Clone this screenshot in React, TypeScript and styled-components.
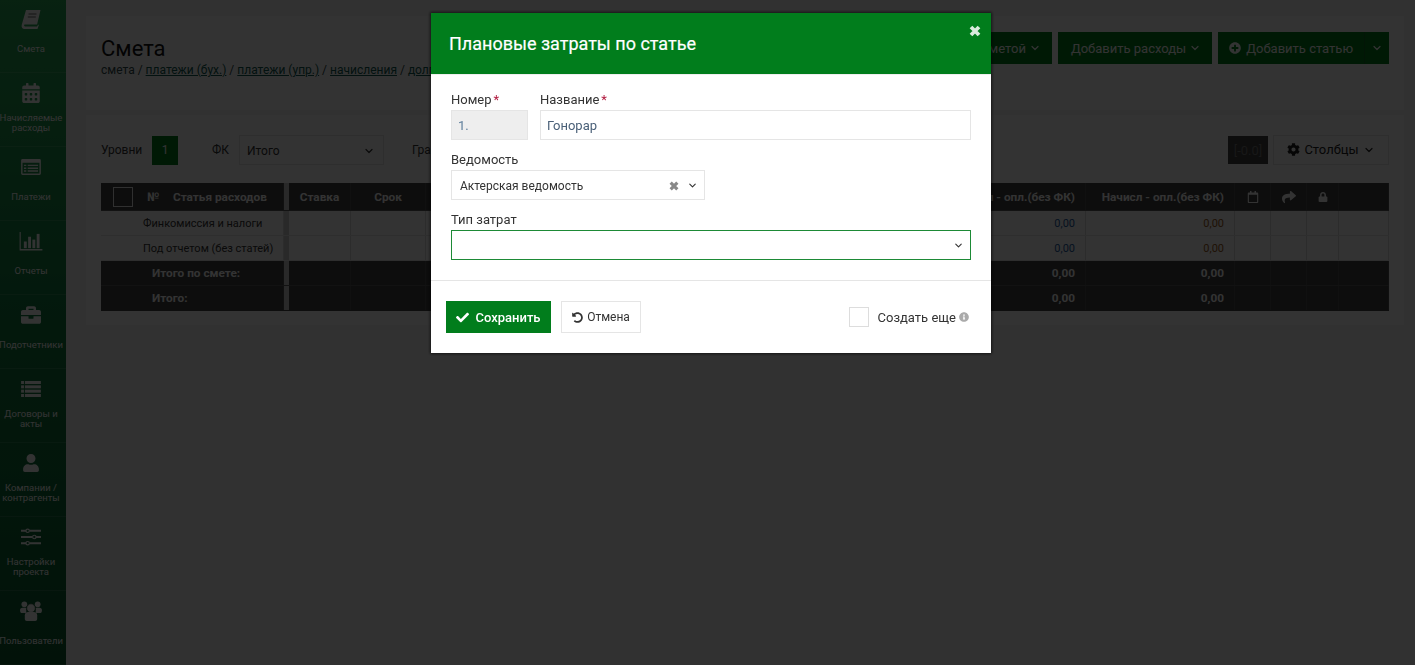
import { ReactNode } from "react";
import styled, { createGlobalStyle } from "styled-components";
import { ChevronDown } from "lucide-react";
import {
    FaBriefcase,
    FaCalendarAlt,
    FaCheck,
    FaCog,
    FaInfoCircle,
    FaLock,
    FaPlusCircle,
    FaShare,
    FaUndoAlt,
    FaUser,
    FaRegCalendar,
} from "react-icons/fa";

const GlobalStyle = createGlobalStyle`
    html, body {
        margin: 0;
        height: 100%;
        overflow: hidden;
        background: #f6f6f6;
        font-family: Roboto, "Liberation Sans", sans-serif;
        color: #333;
    }
    * { box-sizing: border-box; }
`;

const Page = styled.div`
    display: flex;
    height: 665px;
`;

const Sidebar = styled.nav`
    width: 66px;
    flex: none;
    height: 665px;
    overflow: hidden;
    background: linear-gradient(180deg, #28a855 0%, #127c40 45%, #0a5c30 100%);
`;

const SideItem = styled.div`
    height: 74px;
    padding: 8px 4px 0 0;
    border-bottom: 1px solid rgba(255, 255, 255, 0.12);
    color: #fff;
    text-align: center;

    &:first-child {
        height: 73px;
        padding-top: 7px;
    }
`;

const SideIcon = styled.div`
    height: 24px;
    margin-bottom: 8px;
    display: flex;
    align-items: center;
    justify-content: center;
    font-size: 20px;
`;

const SideLabel = styled.div`
    height: 20px;
    display: flex;
    align-items: center;
    justify-content: center;
    font-size: 9.5px;
    line-height: 10px;
`;

const Main = styled.main`
    flex: 1;
    padding: 16px 11px 0 20px;
`;

const Card = styled.section`
    background: #fff;
`;

const HeadCard = styled(Card)`
    height: 94px;
    padding: 16px 15px 0;
    display: flex;
    justify-content: space-between;
    margin-bottom: 5px;
`;

const TitleBlock = styled.div`
    white-space: nowrap;
`;

const Title = styled.h1`
    margin: 4px 0 0;
    font-size: 22px;
    line-height: 26px;
    font-weight: 400;
    color: #111;
`;

const Crumbs = styled.div`
    font-size: 12px;
    line-height: 16px;
    color: #2f4a4a;

    a {
        color: #0f5a50;
        text-decoration: underline;
    }
`;

const Actions = styled.div`
    display: flex;
    gap: 6px;
    height: 32px;
`;

const GreenButton = styled.button`
    height: 32px;
    border: 0;
    padding: 0 11px 0 13px;
    background: #017d1c;
    color: #fff;
    font: 400 13px Roboto, sans-serif;
    display: flex;
    align-items: center;
    gap: 3px;
    white-space: nowrap;
`;

const AddButton = styled(GreenButton)`
    padding: 0 11px;
    gap: 5px;
`;

const SplitCaret = styled(GreenButton)`
    width: 25px;
    padding: 0;
    margin-left: -6px;
    justify-content: center;
    border-left: 1px solid #0d6a22;
`;

const TableCard = styled(Card)`
    height: 210px;
    padding: 20px 15px 0;
`;

const Filters = styled.div`
    display: flex;
    align-items: center;
    height: 30px;
    margin-bottom: 18px;
    font-size: 12px;
`;

const FilterLabel = styled.span<{ $w: number }>`
    width: ${(p) => p.$w}px;
    flex: none;
    white-space: nowrap;
`;

const LevelBox = styled.div`
    width: 26px;
    height: 29px;
    margin-right: 34px;
    background: #017d1c;
    color: #fff;
    display: flex;
    align-items: center;
    justify-content: center;
`;

const FilterSelect = styled.div`
    width: 145px;
    height: 30px;
    margin-right: 28px;
    padding: 2px 8px 0 7px;
    border: 1px solid #e5e5e5;
    display: flex;
    align-items: center;
    justify-content: space-between;
`;

const Spacer = styled.div`
    flex: 1;
`;

const ZeroBox = styled.div`
    width: 40px;
    height: 28px;
    margin-right: 5px;
    background: #404040;
    color: #777;
    display: flex;
    align-items: center;
    justify-content: center;
    font-size: 13px;
`;

const ColumnsButton = styled.div`
    width: 116px;
    height: 30px;
    padding-bottom: 1px;
    border: 1px solid #e5e5e5;
    color: #222;
    font-size: 13px;
    display: flex;
    align-items: center;
    justify-content: center;
    gap: 4px;
`;

const Grid = styled.div``;

const Row = styled.div<{ $kind: "head" | "body" | "total" }>`
    display: grid;
    grid-template-columns: 183px 5px 62px 75px 510px 150px 149px 36px 36px 32px 50px;
    height: ${(p) => (p.$kind === "head" ? 28 : 25)}px;
    background: ${(p) => (p.$kind === "body" ? "#fff" : "#404040")};
    color: ${(p) => (p.$kind === "body" ? "#333" : "#fff")};
    font-size: ${(p) => (p.$kind === "body" ? 11 : 11.8)}px;
    font-weight: ${(p) => (p.$kind === "body" ? 400 : 700)};
    border-bottom: 1px solid ${(p) => (p.$kind === "body" ? "#e5e5e5" : "#5a5a5a")};

    &:last-child {
        border-bottom-color: #404040;
    }
`;

const Cell = styled.div<{ $align?: string; $pad?: number; $blue?: boolean; $red?: boolean }>`
    display: flex;
    align-items: center;
    justify-content: ${(p) => p.$align || "flex-start"};
    padding: 0 10px;
    padding-left: ${(p) => (p.$pad !== undefined ? p.$pad : 10)}px;
    border-right: 1px solid rgba(128, 128, 128, 0.3);
    white-space: nowrap;
    overflow: hidden;
    color: ${(p) => (p.$blue ? "#1b5aa0" : p.$red ? "#9a5a20" : "inherit")};
`;

const Gutter = styled.div`
    background: #ccc;
`;

const HeadCheck = styled.span`
    width: 20px;
    height: 20px;
    flex: none;
    margin: 0 14px 0 12px;
    border: 1px solid #eee;
`;

const NumberGap = styled.span`
    width: 14px;
    flex: none;
`;

const Backdrop = styled.div`
    position: fixed;
    inset: 0;
    background: rgba(0, 0, 0, 0.8);
`;

const Modal = styled.div`
    width: 560px;
    height: 340px;
    margin: 13px 0 0 431px;
    background: #fff;
    box-shadow: 0 0 3px 1px rgba(0, 0, 0, 0.6);
`;

const ModalHead = styled.header`
    position: relative;
    height: 61px;
    background: #017d1c;
    padding-left: 18px;
    display: flex;
    align-items: center;
`;

const ModalTitle = styled.h2`
    margin: 0;
    font-size: 18px;
    font-weight: 400;
    color: #fff;
    -webkit-text-stroke: 0.2px #fff;
`;

const Close = styled.span`
    position: absolute;
    top: 12px;
    right: 10px;
    color: #fff;
    opacity: 0.85;
    display: flex;
`;

const ModalBody = styled.div`
    height: 207px;
    padding: 16px 20px 0;
    border-top: 1px solid #eee;
    border-bottom: 1px solid #e5e5e5;
`;

const FieldRow = styled.div`
    display: flex;
    gap: 12px;
    margin-bottom: 11px;
`;

const Field = styled.div<{ $w?: number }>`
    width: ${(p) => (p.$w ? `${p.$w}px` : "auto")};
    flex: ${(p) => (p.$w ? "none" : 1)};
`;

const Label = styled.label`
    display: block;
    height: 19px;
    font-size: 13px;
    line-height: 18px;
    color: #333;

    b {
        font-weight: 400;
        color: #b0173c;
        margin-left: 2px;
    }
`;

const Input = styled.div<{ $disabled?: boolean }>`
    height: 30px;
    padding: 0 6px;
    border: 1px solid #e5e5e5;
    background: ${(p) => (p.$disabled ? "#eee" : "#fff")};
    color: ${(p) => (p.$disabled ? "#5f7f9c" : "#4a6078")};
    font-size: 13px;
    display: flex;
    align-items: center;
`;

const Select = styled.div<{ $focus?: boolean }>`
    height: 30px;
    padding: 1px 6px 0 8px;
    border: 1px solid ${(p) => (p.$focus ? "#1d8a36" : "#e5e5e5")};
    font-size: 12px;
    color: #333;
    display: flex;
    align-items: center;
    justify-content: flex-end;
    gap: 8px;
`;

const SelectValue = styled.span`
    flex: 1;
`;

const ClearMark = styled.span`
    color: #888;
    display: flex;
`;

const ModalFoot = styled.footer`
    height: 72px;
    padding: 20px 22px 0 15px;
    display: flex;
    align-items: flex-start;
`;

const SaveButton = styled.button`
    width: 105px;
    height: 32px;
    border: 0;
    padding: 0;
    margin-right: 10px;
    background: #017d1c;
    color: #fff;
    font: 500 13px Roboto, sans-serif;
    display: flex;
    align-items: center;
    justify-content: center;
    gap: 6px;

    svg {
        flex: none;
    }
`;

const CancelButton = styled.button`
    width: 80px;
    height: 32px;
    border: 1px solid #e5e5e5;
    padding: 0;
    background: #fff;
    color: #333;
    font: 400 12px Roboto, sans-serif;
    display: flex;
    align-items: center;
    justify-content: center;
    gap: 4px;
`;

const CreateMore = styled.div`
    margin-left: auto;
    height: 32px;
    display: flex;
    align-items: center;
    font-size: 13px;
    color: #333;
`;

const CheckBox = styled.span`
    width: 20px;
    height: 20px;
    margin-right: 9px;
    border: 1px solid #ddd;
`;

const InfoMark = styled.span`
    margin-left: 3px;
    color: #aaa;
    font-size: 10px;
    display: flex;
`;

// нарисованные иконки, которых нет в наборах в нужном виде
const BookIcon = () => (
    <svg width="20" height="20" viewBox="0 0 20 20" fill="currentColor">
        <path d="M5 1h14.500l-3.400 14.500H4c-.7 0-1 .5-.9 1 .1.6.5 1 1.200 1H16l1-1.500 1-.5L16.500 20H3.500C1.300 20 .2 18 .7 16z" />
        <path d="M7.500 5h8M6.800 8h8" stroke="#000" strokeOpacity=".6" strokeWidth="1" />
    </svg>
);

const ListAltIcon = () => (
    <svg width="20" height="16" viewBox="0 0 21 17" fill="currentColor">
        <path fillRule="evenodd" d="M1.500 0h18A1.500 1.500 0 0 1 21 1.500v14a1.500 1.500 0 0 1-1.500 1.500h-18A1.500 1.500 0 0 1 0 15.500v-14A1.500 1.500 0 0 1 1.500 0zM1.500 4v11.500h18V4z" />
        <path d="M3 6h2.500v1.500H3zM7 6h11v1.500H7zM3 9h2.500v1.500H3zM7 9h11v1.500H7zM3 12h2.500v1.500H3zM7 12h11v1.500H7z" />
    </svg>
);

const ChartIcon = () => (
    <svg width="24" height="19" viewBox="0 0 24 20" fill="currentColor">
        <path d="M0 0h1.200v18H24v1.500H0z" />
        <rect x="4.500" y="10" width="3" height="7" />
        <rect x="9" y="5" width="3" height="12" />
        <rect x="13.500" y="8" width="3" height="9" />
        <rect x="18" y="2" width="3" height="15" />
    </svg>
);

const RowsIcon = () => (
    <svg width="20" height="16" viewBox="0 0 21 17" fill="currentColor">
        <rect x="0" y="0" width="3" height="3.200" />
        <rect x="4" y="0" width="17" height="3.200" />
        <rect x="0" y="4.600" width="3" height="3.200" />
        <rect x="4" y="4.600" width="17" height="3.200" />
        <rect x="0" y="9.200" width="3" height="3.200" />
        <rect x="4" y="9.200" width="17" height="3.200" />
        <rect x="0" y="13.800" width="3" height="3.200" />
        <rect x="4" y="13.800" width="17" height="3.200" />
    </svg>
);

const SlidersIcon = () => (
    <svg width="20" height="18" viewBox="0 0 21 18" fill="none" stroke="currentColor">
        <path d="M0 2.500h5.500M9 2.500h12M0 9h12M15.500 9H21M0 15.500h5.500M9 15.500h12" strokeWidth="2.200" />
        <circle cx="7" cy="2.500" r="1.800" strokeWidth="1.200" />
        <circle cx="14" cy="9" r="1.800" strokeWidth="1.200" />
        <circle cx="7" cy="15.500" r="1.800" strokeWidth="1.200" />
    </svg>
);

const UsersIcon = () => (
    <svg width="22" height="20" viewBox="0 0 23 21" fill="currentColor">
        <circle cx="4.500" cy="3.500" r="3" />
        <circle cx="18.500" cy="3.500" r="3" />
        <path d="M0 9.500C0 7.800 1.500 7 2.500 7h4v5.500H1.500C.6 12.500 0 11.500 0 9.500zM23 9.500C23 7.800 21.500 7 20.500 7h-4v5.500h5c.9 0 1.500-1 1.500-3z" />
        <circle cx="11.500" cy="7.500" r="4.500" stroke="#0a3a1c" strokeWidth=".6" />
        <path d="M5 15c0-2.500 1.800-3.500 3.500-3.500h6c1.700 0 3.500 1 3.500 3.500v4c0 1.200-1 2-2 2H7c-1 0-2-.8-2-2z" />
    </svg>
);

const FatCross = ({ size }: { size: number }) => (
    <svg width={size} height={size} viewBox="0 0 12 12" fill="none" stroke="currentColor" strokeWidth="3.800">
        <path d="M2 2l8 8M10 2l-8 8" />
    </svg>
);

const sideItems: { icon: ReactNode; label: ReactNode }[] = [
    { icon: <BookIcon />, label: "Смета" },
    { icon: <FaCalendarAlt />, label: <>Начисляемые<br />расходы</> },
    { icon: <ListAltIcon />, label: "Платежи" },
    { icon: <ChartIcon />, label: "Отчеты" },
    { icon: <FaBriefcase />, label: "Подотчетники" },
    { icon: <RowsIcon />, label: <>Договоры и<br />акты</> },
    { icon: <FaUser size={18} />, label: <>Компании /<br />контрагенты</> },
    { icon: <SlidersIcon />, label: <>Настройки<br />проекта</> },
    { icon: <UsersIcon />, label: "Пользователи" },
];

function Chevron({ size = 12 }: { size?: number }) {
    return <ChevronDown size={size} strokeWidth={2.4} />;
}

function TableRow({ name, kind }: { name: string; kind: "body" | "total" }) {
    const total = kind === "total";
    return (
        <Row $kind={kind}>
            <Cell $pad={total ? 51 : 42}>{name}</Cell>
            <Gutter />
            <Cell />
            <Cell />
            <Cell />
            <Cell $align="flex-end" $blue={!total}>0,00</Cell>
            <Cell $align="flex-end" $red={!total}>0,00</Cell>
            <Cell />
            <Cell />
            <Cell />
            <Cell />
        </Row>
    );
}

function App() {
    return (
        <>
            <GlobalStyle />
            <Page>
                <Sidebar>
                    {sideItems.map((item, i) => (
                        <SideItem key={i}>
                            <SideIcon>{item.icon}</SideIcon>
                            <SideLabel>
                                <span>{item.label}</span>
                            </SideLabel>
                        </SideItem>
                    ))}
                </Sidebar>
                <Main>
                    <HeadCard>
                        <TitleBlock>
                            <Title>Смета</Title>
                            <Crumbs>
                                смета / <a>платежи (бух.)</a> / <a>платежи (упр.)</a> / <a>начисления</a> / <a>долги</a>
                            </Crumbs>
                        </TitleBlock>
                        <Actions>
                            <GreenButton>Работа со сметой <Chevron /></GreenButton>
                            <GreenButton>Добавить расходы <Chevron /></GreenButton>
                            <AddButton><FaPlusCircle size={12} /> Добавить статью</AddButton>
                            <SplitCaret><Chevron /></SplitCaret>
                        </Actions>
                    </HeadCard>
                    <TableCard>
                        <Filters>
                            <FilterLabel $w={51}>Уровни</FilterLabel>
                            <LevelBox>1</LevelBox>
                            <FilterLabel $w={27}>ФК</FilterLabel>
                            <FilterSelect>
                                Итого <Chevron />
                            </FilterSelect>
                            <FilterLabel $w={80}>Графики</FilterLabel>
                            <Spacer />
                            <ZeroBox>[-0.0]</ZeroBox>
                            <ColumnsButton><FaCog size={13} /> Столбцы <Chevron /></ColumnsButton>
                        </Filters>
                        <Grid>
                            <Row $kind="head">
                                <Cell $pad={0}><HeadCheck />№<NumberGap />Статья расходов</Cell>
                                <Gutter />
                                <Cell $align="center" $pad={10}>Ставка</Cell>
                                <Cell $align="center">Срок</Cell>
                                <Cell />
                                <Cell $align="flex-end" $pad={0}>Начисл - опл.(без ФК)</Cell>
                                <Cell $align="flex-end" $pad={0}>Начисл - опл.(без ФК)</Cell>
                                <Cell $align="center" $pad={10}><FaRegCalendar size={12} /></Cell>
                                <Cell $align="center" $pad={10}><FaShare size={14} /></Cell>
                                <Cell $align="center" $pad={10}><FaLock size={10} /></Cell>
                                <Cell />
                            </Row>
                            <TableRow kind="body" name="Финкомиссия и налоги" />
                            <TableRow kind="body" name="Под отчетом (без статей)" />
                            <TableRow kind="total" name="Итого по смете:" />
                            <TableRow kind="total" name="Итого:" />
                        </Grid>
                    </TableCard>
                </Main>
            </Page>
            <Backdrop>
                <Modal>
                    <ModalHead>
                        <ModalTitle>Плановые затраты по статье</ModalTitle>
                        <Close><FatCross size={12} /></Close>
                    </ModalHead>
                    <ModalBody>
                        <FieldRow>
                            <Field $w={77}>
                                <Label>Номер<b>*</b></Label>
                                <Input $disabled>1.</Input>
                            </Field>
                            <Field>
                                <Label>Название<b>*</b></Label>
                                <Input>Гонорар</Input>
                            </Field>
                        </FieldRow>
                        <FieldRow>
                            <Field $w={254}>
                                <Label>Ведомость</Label>
                                <Select>
                                    <SelectValue>Актерская ведомость</SelectValue>
                                    <ClearMark><FatCross size={10} /></ClearMark>
                                    <Chevron size={11} />
                                </Select>
                            </Field>
                        </FieldRow>
                        <Field>
                            <Label>Тип затрат</Label>
                            <Select $focus><Chevron size={11} /></Select>
                        </Field>
                    </ModalBody>
                    <ModalFoot>
                        <SaveButton><FaCheck size={13} /> Сохранить</SaveButton>
                        <CancelButton><FaUndoAlt size={11} /> Отмена</CancelButton>
                        <CreateMore>
                            <CheckBox />
                            Создать еще
                            <InfoMark><FaInfoCircle /></InfoMark>
                        </CreateMore>
                    </ModalFoot>
                </Modal>
            </Backdrop>
        </>
    );
}

export default App;
